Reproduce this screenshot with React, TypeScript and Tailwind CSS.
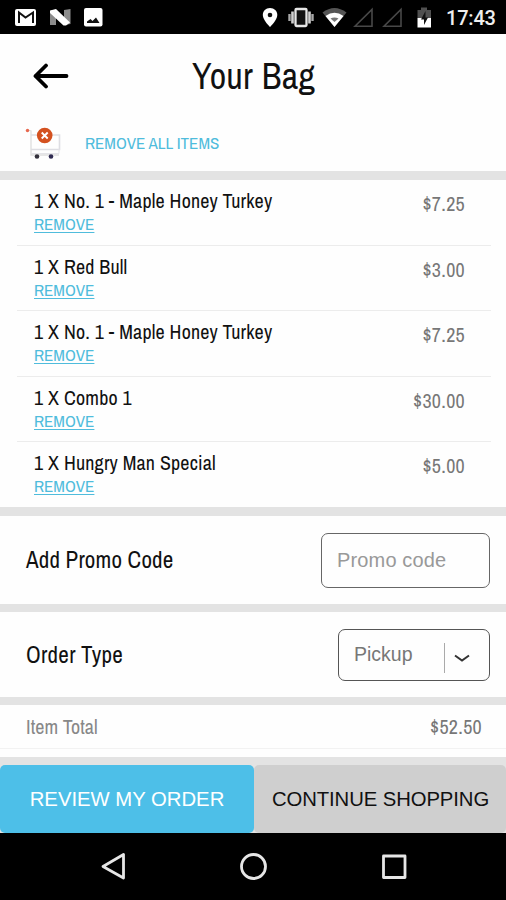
const NARROW = "font-['Liberation_Sans_Narrow','Archivo_Narrow','Liberation_Sans',sans-serif]";

const items = [
  { name: '1 X No. 1 - Maple Honey Turkey', price: '$7.25' },
  { name: '1 X Red Bull', price: '$3.00' },
  { name: '1 X No. 1 - Maple Honey Turkey', price: '$7.25' },
  { name: '1 X Combo 1', price: '$30.00' },
  { name: '1 X Hungry Man Special', price: '$5.00' },
];

function StatusBar() {
  return (
    <div className="flex h-[34px] shrink-0 items-start bg-black">
      <svg width="506" height="34" viewBox="0 0 506 34">
        {/* mail */}
        <rect x="15" y="9" width="21" height="17" rx="2" fill="#fff" />
        <path d="M19 23V12.500L25.500 17.500L33 12.500V23" fill="none" stroke="#111" strokeWidth="2" />
        {/* N */}
        <path d="M50 11L56 9.500V25H50ZM64 10L70.500 9V24L64 25Z" fill="#8c8c8c" />
        <path d="M50 10.500L56 9L70 22.500L66 25.500H63.500L50 13Z" fill="#fff" />
        {/* picture */}
        <rect x="84" y="8" width="18.500" height="18.500" rx="2" fill="#fff" />
        <path d="M87 23V21.500L90.500 19L92.500 21L96 17.500L99.500 23Z" fill="#111" />
        {/* location */}
        <path d="M270 8C265.800 8 262.800 11 262.800 15C262.800 20 270 27 270 27S277.300 20 277.300 15C277.300 11 274.200 8 270 8Z" fill="#fff" />
        <circle cx="270" cy="15" r="2.300" fill="#111" />
        {/* vibrate */}
        <rect x="295.500" y="9" width="11" height="17" rx="1" fill="#111" stroke="#e6e6e6" strokeWidth="2.300" />
        <path d="M292.500 11.500V23.500M309.500 11.500V23.500" stroke="#d0d0d0" strokeWidth="2.600" />
        <path d="M289.500 14V21M312.500 14V21" stroke="#a8a8a8" strokeWidth="2.400" />
        {/* wifi */}
        <path d="M322.500 12.500Q334.500 3.500 346.500 12.500L334.500 27Z" fill="#555" />
        <path d="M325.500 16Q334.500 9.500 343.500 16L334.500 27Z" fill="#fff" />
        <path d="M330.500 18.500Q334.500 16.500 338.500 18.500L334.500 22Z" fill="#777" />
        {/* signal */}
        <path d="M355 26.300H372V9.500ZM384 26.300H401V9.500Z" fill="none" stroke="#484848" strokeWidth="1.600" />
        {/* battery */}
        <path d="M417.500 18V10H421V7.500H427V10H431V18Z" fill="#505050" />
        <path d="M417.500 18H431V27.500H417.500Z" fill="#fff" />
        <path d="M425.500 11L421 19.500H424V25L428 17.500H425.500Z" fill="#111" />
      </svg>
      <span className="-ml-[60px] mt-[6px] font-['Roboto',sans-serif] text-[20px] leading-6 font-medium tracking-[-0.200px] text-[#eee]">17:43</span>
    </div>
  );
}

function CartIcon() {
  return (
    <svg width="38" height="36" viewBox="0 0 38 36" className="shrink-0">
      <path d="M4 5L7 6V30H35" fill="none" stroke="#dedede" strokeWidth="1.300" />
      <path d="M7 10H35.500V24.500H7" fill="none" stroke="#dedee3" strokeWidth="1.600" />
      <path d="M35 24V28.500H7" fill="none" stroke="#e4e4e8" strokeWidth="1" />
      <circle cx="3.500" cy="5.500" r="1.700" fill="#e8684e" />
      <circle cx="20.700" cy="10.500" r="7.800" fill="#d4511f" />
      <path d="M17.700 7.500L23.700 13.500M23.700 7.500L17.700 13.500" stroke="#fff" strokeWidth="1.900" />
      <circle cx="13" cy="31.500" r="2.300" fill="#33313c" />
      <circle cx="27" cy="31.500" r="2.300" fill="#2f2b52" />
    </svg>
  );
}

export default function App() {
  return (
    <div className={`flex h-[900px] w-[506px] flex-col overflow-hidden bg-[#fefefe] text-[#111] ${NARROW}`}>
      <StatusBar />

      <header className="flex h-[80px] shrink-0 items-start">
        <svg width="36" height="26" viewBox="0 0 36 26" className="mt-[29px] ml-[33px]">
          <path d="M13 2.500L2.500 13L13 23.500M2.500 13H33.500" fill="none" stroke="#000" strokeWidth="3.800" strokeLinecap="round" strokeLinejoin="round" />
        </svg>
        <h1 className="mt-[22px] ml-[123px] text-[36px] leading-10 tracking-[0.300px] whitespace-nowrap text-[#111]">Your Bag</h1>
      </header>

      <div className="flex h-[57px] shrink-0 items-start pl-6">
        <div className="mt-[11px]"><CartIcon /></div>
        <button className="mt-[17px] ml-[23px] text-[17px] leading-6 whitespace-nowrap text-[#4fbcdc]">REMOVE ALL ITEMS</button>
      </div>

      <ul className="h-[336px] shrink-0 border-t-9 border-[#e3e3e3]">
        {items.map((item, i) => (
          <li key={i} className={`mr-[15px] ml-[17px] flex h-[65.500px] items-start justify-between border-b pr-[26px] pl-[17px] ${i < 4 ? 'border-[#ececec]' : 'border-[#e3e3e3]'}`}>
            <div className="flex flex-col items-start pt-[9px]">
              <span className="text-[20px] leading-6 tracking-[0.190px] whitespace-nowrap">{item.name}</span>
              <button className="-mt-px text-[17px] leading-6 text-[#4fbcdc] underline underline-offset-2">REMOVE</button>
            </div>
            <span className="pt-3 text-[20px] leading-6 tracking-[0.300px] text-[#777]">{item.price}</span>
          </li>
        ))}
      </ul>

      <section className="flex h-[97px] shrink-0 items-start justify-between border-t-9 border-[#e3e3e3] pr-4 pl-[26px]">
        <label className="pt-[32px] text-[23px] leading-6 tracking-[0.200px] whitespace-nowrap">Add Promo Code</label>
        <div className="mt-[17px] flex h-[55px] w-[169px] items-center rounded-[7px] border-[1.500px] border-[#666] pl-[15px] font-['Liberation_Sans',sans-serif] text-[20px] tracking-[0.150px] text-[#999]">
          <span className="-mt-px">Promo code</span>
        </div>
      </section>

      <section className="flex h-[93px] shrink-0 items-start justify-between border-t-8 border-[#e3e3e3] pr-4 pl-[26px]">
        <label className="pt-[31px] text-[23px] leading-6 tracking-[0.300px] whitespace-nowrap">Order Type</label>
        <div className="mt-[17px] flex h-[52px] w-[152px] items-center rounded-[7px] border-[1.500px] border-[#555] pl-[15px] font-['Liberation_Sans',sans-serif] text-[19.500px] text-[#777]">
          <span className="w-[90px]">Pickup</span>
          <span className="mt-[6px] h-[30px] w-px bg-[#aaa]" />
          <svg width="16" height="9" viewBox="0 0 16 9" className="mt-[6px] ml-[9px]">
            <path d="M1 1.500L8 6.500L15 1.500" fill="none" stroke="#333" strokeWidth="2" />
          </svg>
        </div>
      </section>

      <section className="h-[60px] shrink-0 border-t-8 border-[#e3e3e3] text-[20px] leading-6 text-[#888]">
        <div className="flex h-[44px] justify-between border-b border-[#f2f2f2] pt-[10px] pr-[24px] pl-[26px]">
          <span className="tracking-[0.100px]">Item Total</span>
          <span className="tracking-[0.300px] text-[#777]">$52.50</span>
        </div>
      </section>

      <footer className="flex h-[76px] shrink-0 bg-[#e3e3e3] pt-2 font-['Liberation_Sans',sans-serif] text-[20.300px]">
        <button className="w-[254px] rounded-[5px] bg-[#4dbfe8] whitespace-nowrap text-white">REVIEW MY ORDER</button>
        <button className="w-[252px] rounded-[5px] bg-[#cfcfcf] pl-px tracking-[-0.080px] whitespace-nowrap text-[#111]">CONTINUE SHOPPING</button>
      </footer>

      <nav className="h-[67px] shrink-0 bg-black">
        <svg width="506" height="67" viewBox="0 0 506 67" fill="none" stroke="#e6e6e6" strokeWidth="2.800" strokeLinejoin="round">
          <path d="M103 33.500L123.500 21.500V45Z" />
          <circle cx="253.500" cy="33.500" r="12" />
          <rect x="383.500" y="23" width="21.500" height="21.500" />
        </svg>
      </nav>
    </div>
  );
}
